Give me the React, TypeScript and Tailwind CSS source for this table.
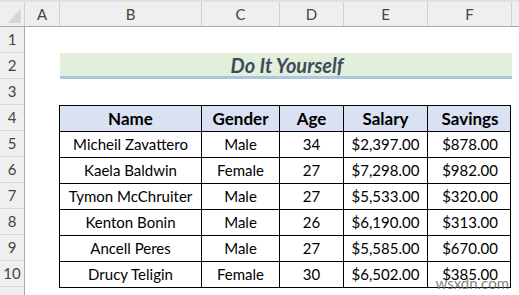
const cols = [
  { label: "A", w: "w-[35px]" },
  { label: "B", w: "w-[142px]" },
  { label: "C", w: "w-[78px]" },
  { label: "D", w: "w-[64px]" },
  { label: "E", w: "w-[84px]" },
  { label: "F", w: "w-[84px]" },
]

const rows = [
  ["Micheil Zavattero", "Male", "34", "$2,397.00", "$878.00"],
  ["Kaela Baldwin", "Female", "27", "$7,298.00", "$982.00"],
  ["Tymon McChruiter", "Male", "27", "$5,533.00", "$320.00"],
  ["Kenton Bonin", "Male", "26", "$6,190.00", "$313.00"],
  ["Ancell Peres", "Male", "27", "$5,585.00", "$670.00"],
  ["Drucy Teligin", "Female", "30", "$6,502.00", "$385.00"],
]

const widths = ["w-[142px]", "w-[78px]", "w-[64px]", "w-[84px]", "w-[84px]"]

export default function App() {
  return (
    <div
      className="w-[519px] h-[295px] overflow-hidden bg-white relative"
      style={{ fontFamily: "Lato, 'Noto Sans', sans-serif" }}
    >
      {/* column letters */}
      <div className="flex h-[27px] bg-[#efefef] border-b border-[#ababab] border-t-2 border-t-[#e2e2e2]">
        <div className="w-[25px] shrink-0 relative border-r border-[#d0d0d0]">
          <div className="absolute right-[3px] bottom-[3px] w-0 h-0 border-l-[14px] border-l-transparent border-b-[14px] border-b-[#d6d6d6]" />
        </div>
        {cols.map((c) => (
          <div
            key={c.label}
            className={`${c.w} shrink-0 flex items-center justify-center border-r border-[#d0d0d0] text-[15px] text-[#444]`}
          >
            {c.label}
          </div>
        ))}
        <div className="flex-1" />
      </div>

      <div className="flex">
        {/* row numbers */}
        <div className="w-[25px] shrink-0 bg-[#efefef] border-r border-[#ababab]">
          {[1, 2, 3, 4, 5, 6, 7, 8, 9, 10].map((n) => (
            <div
              key={n}
              className="h-[26px] flex items-center justify-center border-b border-[#d8d8d8] text-[15px] text-[#444]"
            >
              {n}
            </div>
          ))}
          <div className="h-[26px]" />
        </div>

        {/* sheet */}
        <div className="flex-1">
          <div className="h-[26px]" />
          <div className="h-[26px] ml-[35px] w-[452px] bg-[#e2efda] border-b-[3px] border-[#acc6df] flex items-center justify-center">
            <span className="text-[20px] font-bold italic text-[#3e4b5e] pl-[2px] pt-[1px]">Do It Yourself</span>
          </div>
          <div className="h-[26px]" />
          <div className="ml-[34px] w-[452px]">
            <div className="flex h-[27px] bg-[#d9e1f2] border border-black">
              {["Name", "Gender", "Age", "Salary", "Savings"].map((h, i) => (
                <div
                  key={h}
                  className={`${widths[i]} shrink-0 flex items-center justify-center font-bold text-[17px] text-black ${i < 4 ? "border-r border-black" : ""}`}
                >
                  {h}
                </div>
              ))}
            </div>
            {rows.map((r) => (
              <div key={r[0]} className="flex h-[26px] border-x border-b border-black">
                {r.map((v, i) => (
                  <div
                    key={i}
                    className={`${widths[i]} shrink-0 flex items-center justify-center text-[15px] text-black ${i < 4 ? "border-r border-black" : ""}`}
                  >
                    {v}
                  </div>
                ))}
              </div>
            ))}
          </div>
        </div>
      </div>

      <div className="absolute right-[10px] bottom-[1px] text-[15px] text-[#666] opacity-80">wsxdn.com</div>
    </div>
  )
}
